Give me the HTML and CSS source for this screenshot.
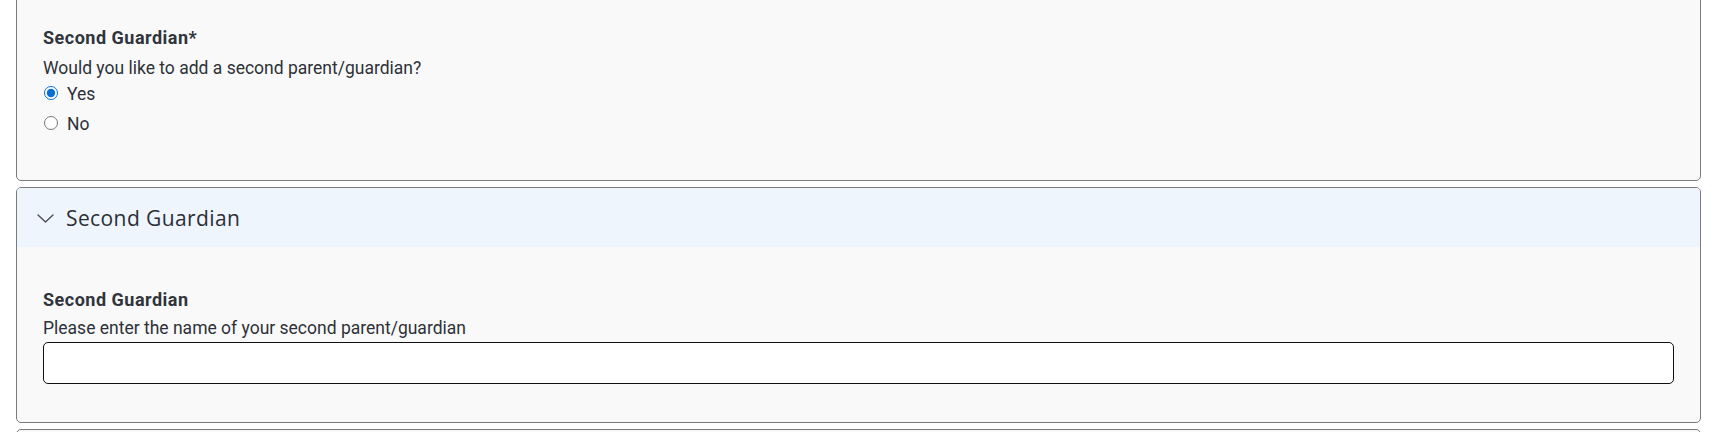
FILE: index.html
```html
<!DOCTYPE html>
<html lang="en">
<head>
<meta charset="utf-8">
<title>Second Guardian</title>
<link rel="stylesheet" href="styles.css">
</head>
<body>
<div class="page">
  <section class="card card-first">
    <div class="card-body body-first">
      <div class="field-label">Second Guardian*</div>
      <div class="field-help">Would you like to add a second parent/guardian?</div>
      <label class="radio-row"><input type="radio" name="sg" checked><span>Yes</span></label>
      <label class="radio-row"><input type="radio" name="sg"><span>No</span></label>
    </div>
  </section>
  <section class="card">
    <div class="card-header">
      <svg class="chevron" width="17" height="9" viewBox="0 0 17 9" aria-hidden="true"><path d="M1 1 L8.5 8 L16 1" fill="none" stroke="#4a4f57" stroke-width="1.4" stroke-linecap="round" stroke-linejoin="round"/></svg>
      <span class="header-title">Second Guardian</span>
    </div>
    <div class="card-body body-second">
      <div class="field-label label-tight">Second Guardian</div>
      <div class="field-help help-tight">Please enter the name of your second parent/guardian</div>
      <input class="text-input" type="text">
    </div>
  </section>
  <section class="card card-next"></section>
</div>
</body>
</html>
```
FILE: styles.css
```css
html, body {
  margin: 0;
  padding: 0;
  background: #ffffff;
}
body {
  font-family: Roboto, "Liberation Sans", sans-serif;
  color: #2e3138;
  overflow: hidden;
  height: 432px;
}
.page {
  padding: 0 19px 0 16px;
  display: flex;
  flex-direction: column;
  gap: 6px;
}
.card {
  background: #f9f9f9;
  border: 1px solid #7a7a7a;
  border-radius: 5px;
  overflow: hidden;
}
.card-first {
  margin-top: -10px;
}
.card-body {
  padding: 0 26px;
  display: flex;
  flex-direction: column;
}
.body-first {
  padding-top: 35px;
  padding-bottom: 41px;
}
.body-second {
  padding-top: 41px;
  padding-bottom: 38px;
}
.field-label {
  font-size: 18px;
  line-height: 24px;
  font-weight: 700;
  letter-spacing: 0.5px;
  color: #30343b;
  margin-bottom: 6px;
}
.label-tight {
  margin-bottom: 4px;
}
.field-help {
  font-size: 17.5px;
  line-height: 24px;
  color: #2e3138;
}
.help-tight {
  margin-bottom: 2px;
}
.radio-row {
  display: flex;
  align-items: center;
  height: 29.5px;
  font-size: 17.5px;
  line-height: 29.5px;
  color: #2e3138;
}
.radio-row input {
  width: 14px;
  height: 14px;
  margin: -3px 9px 0 1px;
  accent-color: #0a6ed1;
}
.card-header {
  background: #eef5fd;
  height: 59px;
  display: flex;
  align-items: center;
  padding-left: 20px;
  gap: 12px;
}
.chevron {
  display: block;
  margin-top: 1px;
}
.header-title {
  font-family: "Open Sans", sans-serif;
  font-size: 21px;
  color: #2b2f36;
  letter-spacing: 0.4px;
}
.text-input {
  display: block;
  box-sizing: border-box;
  width: 100%;
  height: 42px;
  border: 1.5px solid #111;
  border-radius: 5px;
  background: #fff;
  padding: 0 10px;
  font: inherit;
}
.card-next {
  height: 40px;
}
```
